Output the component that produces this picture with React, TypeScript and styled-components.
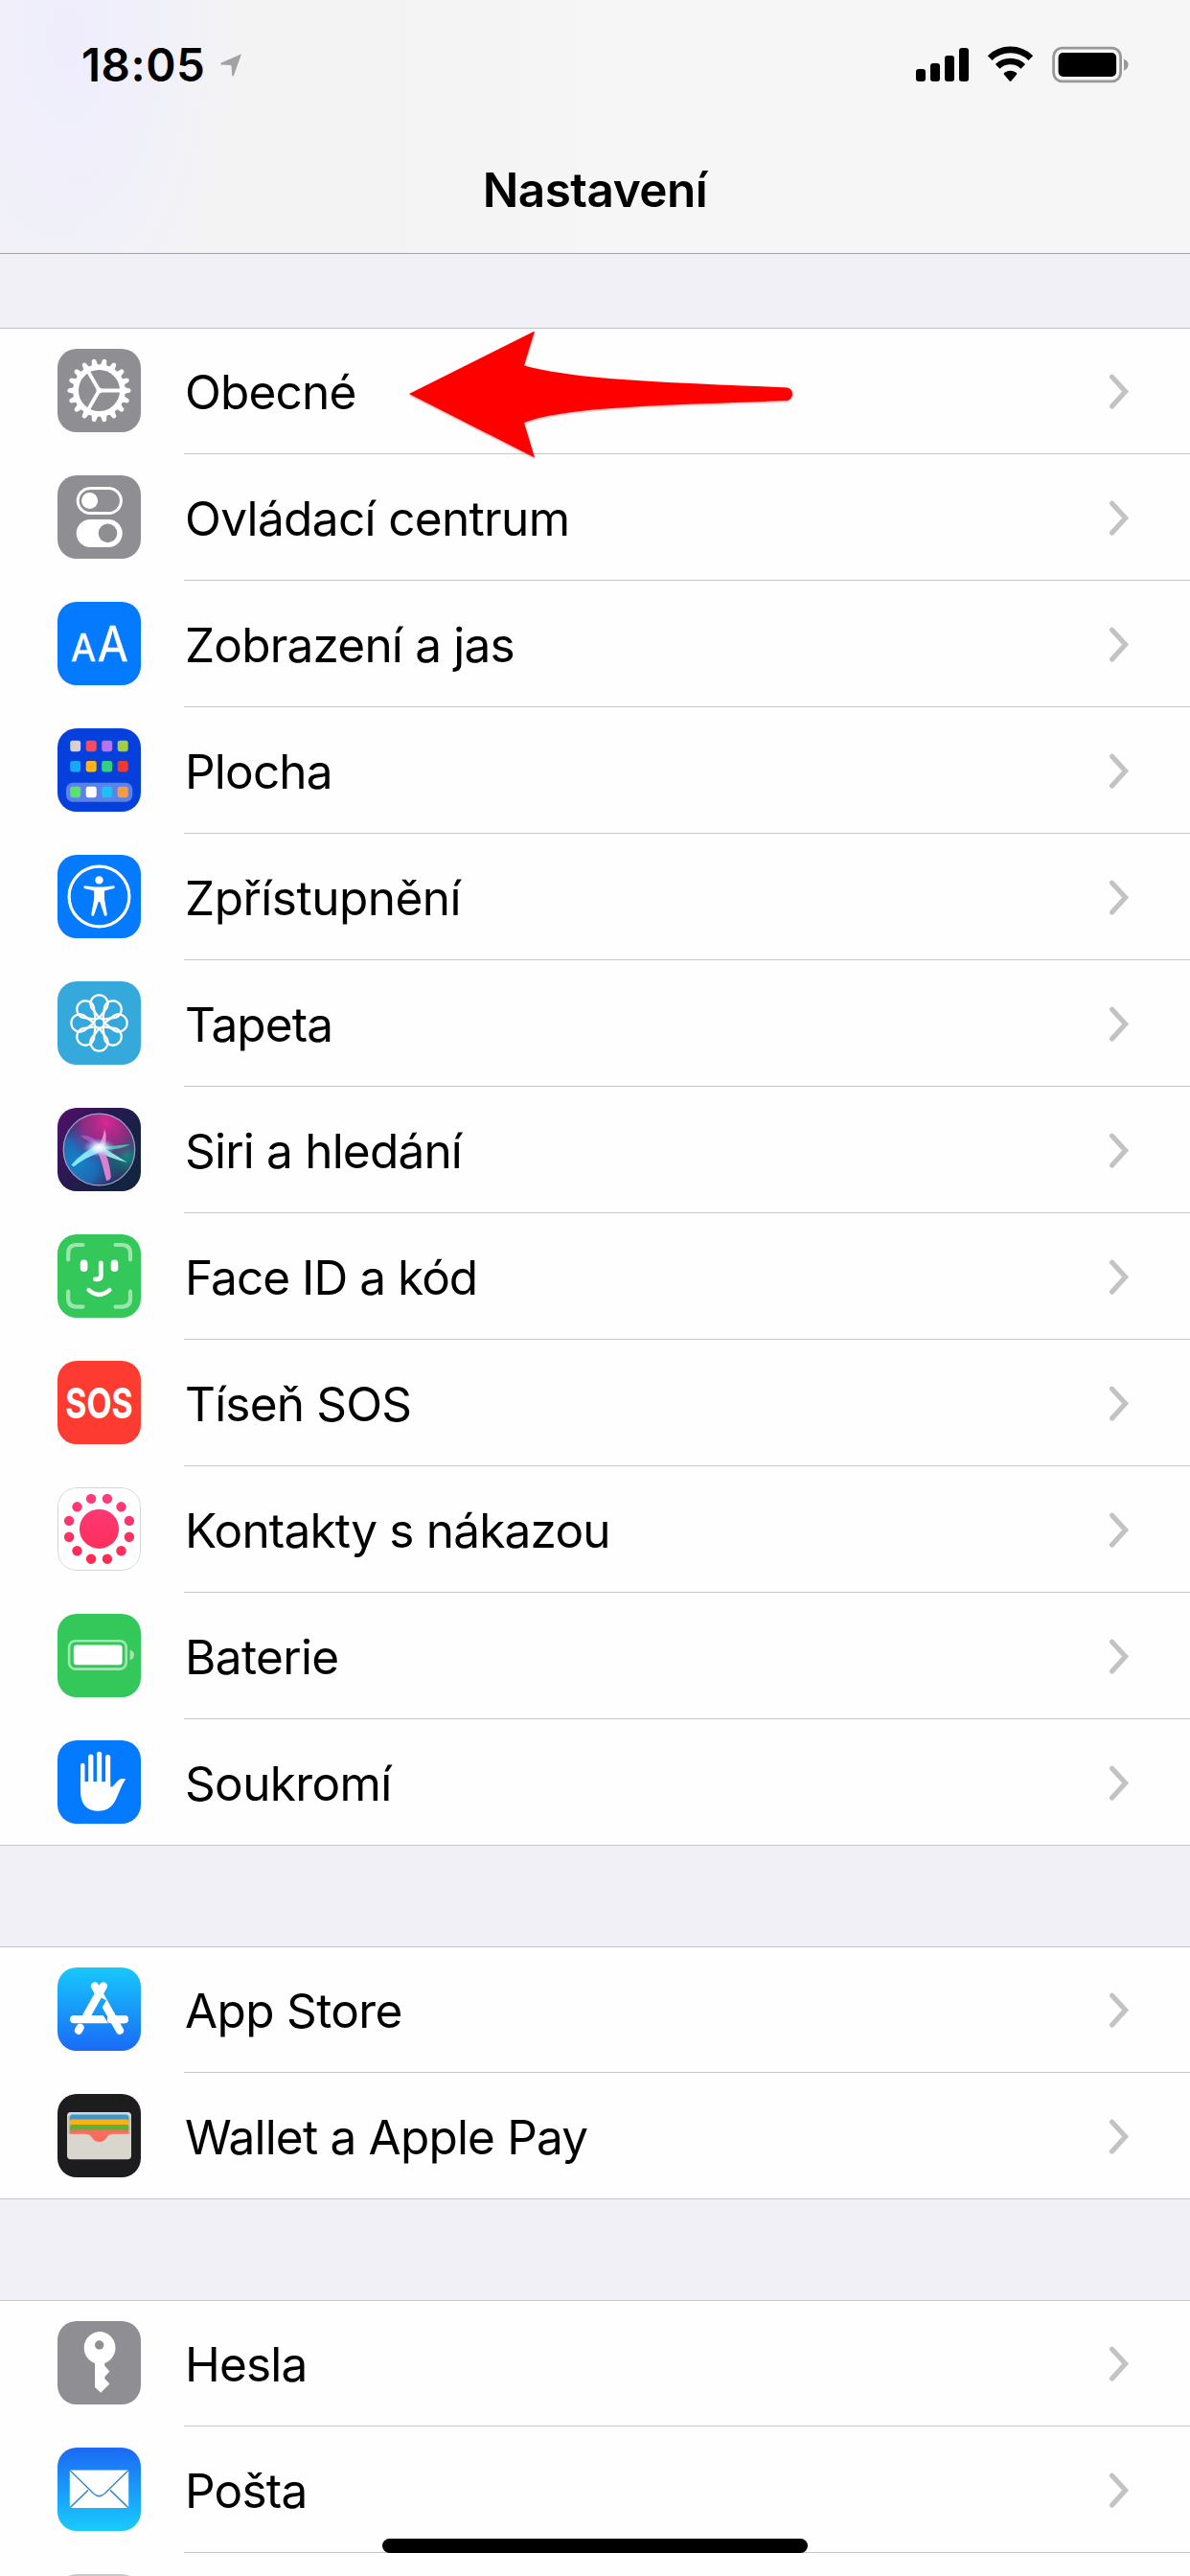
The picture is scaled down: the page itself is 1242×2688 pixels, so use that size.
import React from 'react'
import styled, { createGlobalStyle } from 'styled-components'

const GlobalStyle = createGlobalStyle`
  * {
    box-sizing: border-box;
  }
  body {
    margin: 0;
    background: #f0f0f6;
    font-family: Inter, 'Liberation Sans', sans-serif;
    color: #000;
  }
`

const Screen = styled.div`
  position: relative;
  width: 1242px;
  height: 2688px;
  overflow: hidden;
  background: #f0f0f6;
`

const Header = styled.header`
  height: 265px;
  border-bottom: 1px solid #a5a5a9;
  background:
    radial-gradient(ellipse 170px 330px at 70px 40px, #efedfd 0, rgba(240, 239, 250, 0.8) 50%, transparent 100%),
    linear-gradient(90deg, #f2f2f6 0, #f3f3f4 240px, #f3f3f3 420px, #f6f6f6 620px);
`

const StatusBar = styled.div`
  display: flex;
  align-items: center;
  justify-content: space-between;
  height: 136px;
  padding: 0 64px 0 85px;
`

const StatusGroup = styled.div`
  display: flex;
  align-items: center;
`

const Time = styled.span`
  font-size: 47.5px;
  font-weight: 600;
  letter-spacing: 0.5px;
  line-height: 60px;
  margin-right: 16px;
`

const Title = styled.h1`
  margin: 0;
  font-size: 49.5px;
  font-weight: 600;
  letter-spacing: -0.5px;
  line-height: 60px;
  padding-top: 32px;
  text-align: center;
`

const Groups = styled.main`
  display: flex;
  flex-direction: column;
  gap: 105px;
  padding-top: 77px;
`

const Group = styled.ul`
  list-style: none;
  margin: 0;
  padding: 0;
  background: #fefefe;
  box-shadow: inset 0 1px #c6c6ca, inset 0 -1px #c6c6ca;
`

const Row = styled.li`
  position: relative;
  display: flex;
  height: 132px;
  padding-left: 60px;
`

const IconBox = styled.div`
  flex: none;
  width: 87px;
  height: 87px;
  margin: 22px 45px 0 0;
  border-radius: 20px;
  overflow: hidden;
  svg {
    display: block;
  }
`

const RowBody = styled.div<{ $last?: boolean }>`
  flex: 1;
  display: flex;
  align-items: center;
  justify-content: space-between;
  padding: 2px 62px 0 1px;
  border-bottom: 1px solid ${({ $last }) => ($last ? 'transparent' : '#c6c6ca')};
`

const Label = styled.span<{ $tracking?: number }>`
  font-size: 49.5px;
  line-height: 60px;
  letter-spacing: ${({ $tracking = -0.8 }) => $tracking}px;
  white-space: nowrap;
`

const Pointer = styled.svg`
  position: absolute;
  left: 420px;
  top: -2px;
  z-index: 1;
  filter: drop-shadow(0 1px 1px rgba(190, 0, 0, 0.4));
`

const HomeIndicator = styled.div`
  position: absolute;
  left: 399px;
  bottom: 24px;
  width: 444px;
  height: 15px;
  border-radius: 8px;
  background: #000;
`

type TileProps = { fill: string; children?: React.ReactNode }

const Tile = ({ fill, children }: TileProps) => (
  <svg width="87" height="87" viewBox="0 0 87 87" fill="none">
    <rect width="87" height="87" fill={fill} />
    {children}
  </svg>
)

const steps = (n: number) => Array.from({ length: n }, (_, i) => (360 / n) * i)

const GearIcon = () => (
  <Tile fill="#8e8e93">
    <g stroke="#fff" transform="translate(43.5 43.5)">
      {steps(18).map(a => (
        <path
          key={a}
          d="M26 -3.4L32 -2.1Q34.2 0 32 2.1L26 3.4Z"
          fill="#fff"
          stroke="none"
          transform={`rotate(${a})`}
        />
      ))}
      <circle r="24.4" strokeWidth="5.8" />
      {steps(3).map(a => (
        <path key={a} d="M0 0H23" strokeWidth="3.8" transform={`rotate(${a})`} />
      ))}
      <circle r="3" fill="#fff" stroke="none" />
    </g>
  </Tile>
)

const TogglesIcon = () => (
  <Tile fill="#8e8e93">
    <rect x="21.2" y="13.5" width="45.2" height="26" rx="13" stroke="#fff" strokeWidth="3" />
    <circle cx="33.6" cy="26.5" r="8.5" fill="#fff" />
    <rect x="19.7" y="46" width="48" height="29" rx="14.5" fill="#fff" />
    <circle cx="52.5" cy="60.4" r="9.8" fill="#8e8e93" />
  </Tile>
)

const TextSizeIcon = () => (
  <Tile fill="#047aff">
    <g fill="#fff" stroke="#fff" strokeWidth="0.6" strokeLinejoin="round" fontFamily="Inter, sans-serif">
      <text x="14" y="61.8" fontSize="39" textLength="26" lengthAdjust="spacingAndGlyphs">
        A
      </text>
      <text x="41.8" y="61.8" fontSize="50" textLength="32" lengthAdjust="spacingAndGlyphs">
        A
      </text>
    </g>
  </Tile>
)

const homeApps = [
  { y: 12.8, colors: ['#d9cfcb', '#fb4a5c', '#b774f2', '#a4cf3c'] },
  { y: 34, colors: ['#17a9f8', '#ffb51c', '#36cf82', '#f2392f'] },
  { y: 60.8, colors: ['#5be26e', '#ffffff', '#1cc0f5', '#f99a45'] },
]

const HomeScreenIcon = () => (
  <Tile fill="#0640dc">
    <rect x="9" y="56.7" width="69.3" height="20" rx="7" fill="#5c82ea" />
    {homeApps.map(({ y, colors }) =>
      colors.map((c, i) => (
        <rect key={c} x={13.2 + i * 16.5} y={y} width="11" height="11.4" rx="2.4" fill={c} />
      ))
    )}
  </Tile>
)

const AccessibilityIcon = () => (
  <Tile fill="#047aff">
    <circle cx="43.5" cy="43.5" r="31.4" stroke="#fff" strokeWidth="3.2" />
    <circle cx="43.5" cy="26.4" r="4.2" fill="#fff" />
    <path
      d="M28 32.2L39 33.6H48L59 32.2Q60.6 33.8 59 35.1L49 37.4V46L51.8 62.5Q50.8 64.7 49 63.6L44.2 49H42.8L38 63.6Q36.2 64.7 35.2 62.5L38.2 46V37.4L28 35.1Q26.4 33.8 28 32.2Z"
      fill="#fff"
    />
  </Tile>
)

const WallpaperIcon = () => (
  <Tile fill="#35a8dc">
    <g stroke="#fff" strokeWidth="2.3" strokeLinejoin="round" transform="translate(43.5 43.5)">
      {steps(8).map(a => (
        <path
          key={a}
          d="M0 -5.5L-8 -16A9 9 0 1 1 8 -16Z"
          transform={`rotate(${a})`}
        />
      ))}
      <circle r="5.2" />
    </g>
  </Tile>
)

const SiriIcon = () => (
  <Tile fill="url(#siri-bg)">
    <defs>
      <linearGradient id="siri-bg" x1="0" y1="0" x2="0.9" y2="0.6">
        <stop offset="0" stopColor="#540f6c" />
        <stop offset="0.55" stopColor="#261a50" />
        <stop offset="1" stopColor="#14233f" />
      </linearGradient>
      <radialGradient id="siri-pink" cx="0.6" cy="0.12" r="0.6">
        <stop offset="0" stopColor="#d92893" />
        <stop offset="0.55" stopColor="#a12a86" stopOpacity="0.8" />
        <stop offset="1" stopColor="#6b2a8a" stopOpacity="0" />
      </radialGradient>
      <radialGradient id="siri-blue" cx="0.18" cy="0.68" r="0.62">
        <stop offset="0" stopColor="#1583c9" />
        <stop offset="0.5" stopColor="#1d6bb4" />
        <stop offset="1" stopColor="#2754a6" stopOpacity="0" />
      </radialGradient>
      <radialGradient id="siri-teal" cx="0.88" cy="0.58" r="0.45">
        <stop offset="0" stopColor="#128f80" />
        <stop offset="1" stopColor="#145a70" stopOpacity="0" />
      </radialGradient>
      <radialGradient id="siri-glow">
        <stop offset="0" stopColor="#fff" />
        <stop offset="0.35" stopColor="#e2f6ff" stopOpacity="0.85" />
        <stop offset="1" stopColor="#6fb6ff" stopOpacity="0" />
      </radialGradient>
    </defs>
    <circle cx="43.5" cy="43.5" r="37" fill="#2e2a5e" />
    <circle cx="43.5" cy="43.5" r="37" fill="url(#siri-blue)" />
    <circle cx="43.5" cy="43.5" r="37" fill="url(#siri-teal)" />
    <circle cx="43.5" cy="43.5" r="37" fill="url(#siri-pink)" />
    <path d="M24 29Q36 27 45 40Q32 36 24 29Z" fill="#b46ad8" opacity="0.65" />
    <path d="M43 41L76 38Q66 44.5 43 43.5Z" fill="#3fe0b4" opacity="0.8" />
    <path d="M42 38L73 57Q56 53 40 45Z" fill="#9af8e4" opacity="0.9" />
    <path d="M44 38Q27 45 14.5 59.5L17 61.5Q28 52 46 46Z" fill="#8cecff" opacity="0.95" />
    <path d="M42 41Q48 32 49 22Q53 31 48 44Z" fill="#f59ada" opacity="0.85" />
    <path d="M41 42Q47 58 51 76Q57 76 55.5 69Q53.5 52 47 42Z" fill="#ee86d4" opacity="0.9" />
    <ellipse cx="43.5" cy="41.5" rx="17" ry="10" fill="url(#siri-glow)" />
    <circle cx="43.5" cy="43.5" r="37.3" stroke="#a9a3cc" strokeWidth="1.2" />
  </Tile>
)

const FaceIdIcon = () => (
  <Tile fill="#34c759">
    <g stroke="#9be6ad" strokeWidth="4.2" strokeLinecap="round">
      <path d="M11.2 26.5V20Q11.2 11 20 11H26.5" />
      <path d="M60.5 11H67Q76 11 76 20V26.5" />
      <path d="M76 59.5V67Q76 75.6 67 75.6H60.5" />
      <path d="M26.5 75.6H20Q11.2 75.6 11.2 67V59.5" />
    </g>
    <g fill="#fff">
      <rect x="23.8" y="26.4" width="7.6" height="12.6" rx="3.8" />
      <rect x="55.7" y="26.4" width="7.6" height="12.6" rx="3.8" />
    </g>
    <g stroke="#fff" strokeLinecap="round">
      <path d="M45.3 30V43Q45.3 46.8 41.5 46.8H39.4" strokeWidth="4.8" />
      <path d="M32.6 58.2Q43.5 67.5 54.4 58.2" strokeWidth="4.4" />
    </g>
  </Tile>
)

const SosIcon = () => (
  <Tile fill="#fe3b30">
    <text
      transform="translate(43.5 59.6) scale(0.77 1)"
      textAnchor="middle"
      fill="#fff"
      fontFamily="Inter, sans-serif"
      fontSize="44"
      fontWeight="700"
    >
      SOS
    </text>
  </Tile>
)

const ExposureIcon = () => (
  <Tile fill="#fff">
    <defs>
      <linearGradient id="exposure" gradientUnits="userSpaceOnUse" x1="0" y1="8" x2="0" y2="80">
        <stop offset="0" stopColor="#fb3d7e" />
        <stop offset="1" stopColor="#fd2a50" />
      </linearGradient>
    </defs>
    <rect x="0.5" y="0.5" width="86" height="86" rx="19.5" stroke="#d4d4d6" />
    <g fill="url(#exposure)">
      <circle cx="43.5" cy="43.3" r="20.6" />
      {steps(12).map(a => {
        const rad = ((a + 15) * Math.PI) / 180
        return (
          <circle
            key={a}
            cx={43.5 + 32.5 * Math.cos(rad)}
            cy={43.3 + 32.5 * Math.sin(rad)}
            r="5.2"
          />
        )
      })}
    </g>
  </Tile>
)

const BatteryIcon = () => (
  <Tile fill="#34c759">
    <rect x="12.1" y="28.2" width="59.6" height="29.4" rx="6.5" stroke="#a2e7b2" strokeWidth="2.6" />
    <rect x="16.8" y="32.6" width="50.8" height="20.6" rx="3.2" fill="#fff" />
    <path d="M75.6 37.6Q80 39.4 80 43T75.6 48.6Z" fill="#a2e7b2" />
  </Tile>
)

const HandIcon = () => (
  <Tile fill="#047aff">
    <g stroke="#fff" strokeLinecap="round">
      <path d="M26.3 26V50" strokeWidth="4.4" />
      <path d="M34.8 17V50" strokeWidth="5.2" />
      <path d="M43.6 14.4V50" strokeWidth="5.2" />
      <path d="M52.6 17.6V50" strokeWidth="5.2" />
    </g>
    <path
      d="M24.1 43H55.2V48.5H57C60 46.5 62.5 41.5 66 40.3Q69 39.6 71.2 40.6C67 46 64.5 55 60.8 62C57 70 50.5 73.8 42.5 73.8C31 73.8 24.1 67 24.1 54Z"
      fill="#fff"
    />
  </Tile>
)

const AppStoreIcon = () => (
  <Tile fill="url(#appstore)">
    <defs>
      <linearGradient id="appstore" gradientUnits="userSpaceOnUse" x1="0" y1="0" x2="0" y2="87">
        <stop offset="0" stopColor="#18c8fc" />
        <stop offset="1" stopColor="#1a6af6" />
      </linearGradient>
    </defs>
    <g stroke="#fff" strokeWidth="8.2" strokeLinecap="round">
      <path d="M17.2 54.2H69.8" />
      <path d="M50 43L62 61.4" stroke="url(#appstore)" strokeWidth="11.5" strokeLinecap="butt" />
      <path d="M56 54.2H69.8" />
      <path d="M39 19.5L65 65.7" />
      <path d="M46 31.5L38 45" stroke="url(#appstore)" strokeWidth="11.5" strokeLinecap="butt" />
      <path d="M47.8 19.5L30.6 50" strokeWidth="8.4" />
      <path d="M23.6 62.8L22 65.6" />
    </g>
  </Tile>
)

const WalletIcon = () => (
  <Tile fill="#1d1d1f">
    <rect x="10" y="19" width="67" height="49.3" rx="4" fill="#d9d6ce" />
    <path d="M10.4 23Q10.4 19 14 19H73Q76.6 19 76.6 23Z" fill="#cadbe2" />
    <path d="M12.6 26Q12.6 21.6 16 21.6H71.2Q74.6 21.6 74.6 26V28H12.6Z" fill="#3d97c8" />
    <path d="M12.6 29Q12.6 26.6 16 26.6H71.2Q74.6 26.6 74.6 29V33H12.6Z" fill="#fbb018" />
    <path d="M12.6 34Q12.6 32 16 32H71.2Q74.6 32 74.6 34V38H12.6Z" fill="#5fb137" />
    <path
      d="M12.6 39.4Q12.6 37.4 16 37.4H71.2Q74.6 37.4 74.6 39.4V41.8H58Q53.5 41.8 51.8 44.8Q49 50 43.6 50T35.4 44.8Q33.6 41.8 29 41.8H12.6Z"
      fill="#fb6b5e"
    />
    <path d="M12 23V41.6M75.2 23V41.6" stroke="#b9b6ae" strokeWidth="1.2" />
  </Tile>
)

const KeyIcon = () => (
  <Tile fill="#8e8e93">
    <path
      d="M43.7 11A17 17 0 0 1 49.2 44V46.6L54.4 52.4L49.4 58V60.2L54.4 65.4L45.2 74.8L39 69V44A17 17 0 0 1 43.7 11Z"
      fill="#fff"
    />
    <circle cx="43.7" cy="25" r="4.7" fill="#8e8e93" />
  </Tile>
)

const MailIcon = () => (
  <Tile fill="url(#mail)">
    <defs>
      <linearGradient id="mail" x1="0" y1="0" x2="0" y2="1">
        <stop offset="0" stopColor="#1b69f3" />
        <stop offset="1" stopColor="#19cbfd" />
      </linearGradient>
    </defs>
    <rect x="12.8" y="23.5" width="61.4" height="39.5" rx="1" fill="#fff" />
    <g stroke="#3f8cc4" strokeWidth="1.5">
      <path d="M13.2 24L37.5 47.8Q43.5 53.4 49.5 47.8L73.8 24" />
      <path d="M13.2 62.6L32 44.4M73.8 62.6L55 44.4" />
    </g>
  </Tile>
)

const BlankIcon = () => <Tile fill="#c9c9cb" />

const Chevron = () => (
  <svg width="24" height="40" viewBox="0 0 24 40" fill="none">
    <path d="M4.6 4.2L18.6 19.6L4.6 35" stroke="#c3c3c6" strokeWidth="5.2" strokeLinecap="round" />
  </svg>
)

const LocationArrow = () => (
  <svg width="22" height="24" viewBox="0 0 22 24">
    <path
      d="M21.6 0.4Q22 0 21.8 0.8L14 22.8Q12.8 24.4 12.2 22.4L11.6 13.2Q11.4 12.2 10.4 12L1 11.6Q-0.6 10.8 1 9.6Z"
      fill="#a2a2a4"
    />
  </svg>
)

const StatusIcons = () => (
  <svg width="222" height="40" viewBox="0 0 222 40" fill="none">
    <rect x="0" y="24" width="10" height="13" rx="3" fill="#000" />
    <rect x="15" y="18" width="10" height="19" rx="3" fill="#000" />
    <rect x="30" y="10" width="10" height="27" rx="3" fill="#000" />
    <rect x="45" y="2" width="10" height="35" rx="3" fill="#000" />
    <g stroke="#000">
      <path d="M77.2 12.6A30.5 30.5 0 0 1 119.8 12.6" strokeWidth="6.8" />
      <path d="M85.2 21.4A19 19 0 0 1 111.8 21.4" strokeWidth="6.6" />
    </g>
    <path
      d="M91.8 29.6Q91.4 28.6 92.4 27.8Q98.5 23.6 104.6 27.8Q105.6 28.6 105.2 29.6L99.4 36.6Q98.5 37.4 97.6 36.6Z"
      fill="#000"
    />
    <rect x="143.6" y="2.2" width="70" height="34.6" rx="9" stroke="#98989a" strokeWidth="2.8" />
    <rect x="148.6" y="7" width="60.5" height="25" rx="5" fill="#000" />
    <path d="M217 13.4Q221.6 15.4 221.6 19.5T217 25.8Z" fill="#98989a" />
  </svg>
)

interface Item {
  label: string
  icon: React.ComponentType
  tracking?: number
  highlighted?: boolean
}

const groups: Item[][] = [
  [
    { label: 'Obecné', icon: GearIcon, highlighted: true },
    { label: 'Ovládací centrum', icon: TogglesIcon, tracking: -0.65 },
    { label: 'Zobrazení a jas', icon: TextSizeIcon },
    { label: 'Plocha', icon: HomeScreenIcon },
    { label: 'Zpřístupnění', icon: AccessibilityIcon, tracking: -0.5 },
    { label: 'Tapeta', icon: WallpaperIcon, tracking: -0.9 },
    { label: 'Siri a hledání', icon: SiriIcon },
    { label: 'Face ID a kód', icon: FaceIdIcon, tracking: -0.95 },
    { label: 'Tíseň SOS', icon: SosIcon },
    { label: 'Kontakty s nákazou', icon: ExposureIcon },
    { label: 'Baterie', icon: BatteryIcon, tracking: -0.65 },
    { label: 'Soukromí', icon: HandIcon, tracking: -0.65 },
  ],
  [
    { label: 'App Store', icon: AppStoreIcon, tracking: -0.65 },
    { label: 'Wallet a Apple Pay', icon: WalletIcon },
  ],
  [
    { label: 'Hesla', icon: KeyIcon },
    { label: 'Pošta', icon: MailIcon },
    { label: '', icon: BlankIcon },
  ],
]

const App = (): React.JSX.Element => {
  return (
    <Screen>
      <GlobalStyle />
      <Header>
        <StatusBar>
          <StatusGroup>
            <Time>18:05</Time>
            <LocationArrow />
          </StatusGroup>
          <StatusIcons />
        </StatusBar>
        <Title>Nastavení</Title>
      </Header>
      <Groups>
        {groups.map((items, g) => (
          <Group key={g}>
            {items.map(({ label, icon: Icon, tracking, highlighted }, i) => (
              <Row key={label}>
                <IconBox>
                  <Icon />
                </IconBox>
                <RowBody $last={i === items.length - 1}>
                  <Label $tracking={tracking}>{label}</Label>
                  <Chevron />
                </RowBody>
                {highlighted && (
                  <Pointer width="420" height="150" viewBox="420 340 420 150">
                    <path
                      d="M427 411L558 345.5L547 381.5C600 396 690 399 822 404.5Q827 406 827 411T822 418C690 423 590 424 547 441L558 477.5Z"
                      fill="#fe0000"
                    />
                  </Pointer>
                )}
              </Row>
            ))}
          </Group>
        ))}
      </Groups>
      <HomeIndicator />
    </Screen>
  )
}

export default App
